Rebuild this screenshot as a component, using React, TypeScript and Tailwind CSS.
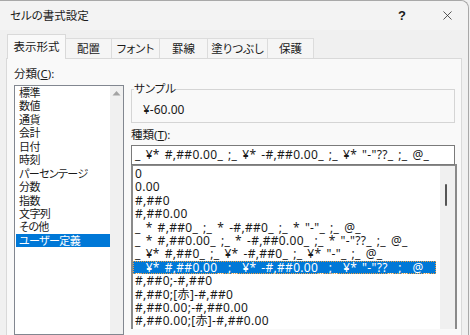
import { X } from 'lucide-react';

const categories = [
  '標準',
  '数値',
  '通貨',
  '会計',
  '日付',
  '時刻',
  'パーセンテージ',
  '分数',
  '指数',
  '文字列',
  'その他',
  'ユーザー定義',
];

const formats = [
  '0',
  '0.00',
  '#,##0',
  '#,##0.00',
  '_ * #,##0_ ;_ * -#,##0_ ;_ * "-"_ ;_ @_',
  '_ * #,##0.00_ ;_ * -#,##0.00_ ;_ * "-"??_ ;_ @_',
  '_ ¥* #,##0_ ;_ ¥* -#,##0_ ;_ ¥* "-"_ ;_ @_',
  '_ ¥* #,##0.00_ ;_ ¥* -#,##0.00_ ;_ ¥* "-"??_ ;_ @_',
  '#,##0;-#,##0',
  '#,##0;[赤]-#,##0',
  '#,##0.00;-#,##0.00',
  '#,##0.00;[赤]-#,##0.00',
];

const tabs = [
  { label: '表示形式', w: 'w-[59px]' },
  { label: '配置', w: 'w-[46px]' },
  { label: 'フォント', w: 'w-[48px]' },
  { label: '罫線', w: 'w-[48px]' },
  { label: '塗りつぶし', w: 'w-[60px]' },
  { label: '保護', w: 'w-[46px]' },
];

export default function App() {
  const selectedCategory = 'ユーザー定義';
  const selectedFormat = formats[7];

  return (
    <div className="w-[470px] h-[335px] overflow-hidden bg-[#f0f0f0] font-['Noto_Sans','Noto_Sans_CJK_JP',sans-serif] text-[12px] text-[#1a1a1a] [font-feature-settings:'palt']">
      <div className="w-[469px] h-[335px] flex flex-col border-r border-t border-[#a8a8a8] rounded-tr-[8px] bg-[#f0f0f0]">
        {/* Title bar */}
        <div className="h-[29px] shrink-0 flex items-center pl-[10px] bg-[#f3f3f3] rounded-tr-[8px]">
          <span className="flex-1 text-[11.5px]">セルの書式設定</span>
          <span className="w-[10px] text-[13px] font-bold mr-[32px] font-['Liberation_Sans',sans-serif]">?</span>
          <X className="w-[15px] h-[15px] mr-[13px] text-[#333]" strokeWidth={1.3} />
        </div>

        {/* Tabs */}
        <div className="h-[28px] shrink-0 flex items-end pl-[7px] text-[11.5px]">
          {tabs.map((t, i) =>
            i === 0 ? (
              <div
                key={t.label}
                className={`${t.w} h-[25px] flex items-center justify-center bg-[#f9f9f9] border border-b-0 border-[#d9d9d9] relative -mb-px z-10 pb-[1px]`}
              >
                {t.label}
              </div>
            ) : (
              <div
                key={t.label}
                className={`${t.w} h-[20px] flex items-center justify-center bg-[#f5f5f5] border border-b-0 border-l-0 border-[#dcdcdc] whitespace-nowrap`}
              >
                {t.label}
              </div>
            )
          )}
        </div>

        {/* Panel */}
        <div className="flex-1 ml-[6px] mr-[6px] border border-b-0 border-[#d9d9d9] bg-[#f9f9f9] flex pl-[7px]">
          {/* Category */}
          <div className="w-[110px] flex flex-col pt-[6px]">
            <div className="h-[18px] leading-[18px] text-[11.5px] mb-[2px]">
              分類(<span className="underline">C</span>):
            </div>
            <div className="flex-1 flex border border-[#828790] bg-white">
              <div className="flex-1 pl-[1px] text-[11px] tracking-[-0.6px]">
                {categories.map((c) => (
                  <div
                    key={c}
                    className={`h-[13.45px] leading-[13.45px] pl-[3px] whitespace-nowrap ${
                      c === selectedCategory ? 'bg-[#0078d7] text-white' : ''
                    }`}
                  >
                    {c}
                  </div>
                ))}
              </div>
              <div className="w-[13px] bg-[#f0f0f0] flex justify-center pt-[4px]">
                <svg width="9" height="6" viewBox="0 0 9 6">
                  <path d="M0.5 5.5 L4.5 1 L8.5 5.5 Z" fill="#a3a3a3" />
                </svg>
              </div>
            </div>
          </div>

          {/* Right side */}
          <div className="ml-[7px] w-[326px] flex flex-col pt-[23px]">
            <fieldset className="h-[41px] border border-[#d5d5d5] px-[10px] mr-[2px]">
              <legend className="px-0 ml-[-8px] leading-[14px] text-[11.5px]">サンプル</legend>
              <div className="leading-[16px] pt-[6px] pl-[1px]">¥-60.00</div>
            </fieldset>
            <div className="h-[22px] leading-[20px] pt-[2px] text-[11.5px]">
              種類(<span className="underline">T</span>):
            </div>
            <div className="h-[20px] border border-[#7a7a7a] bg-white pl-[3px] leading-[18px] whitespace-nowrap mr-[2px] relative z-10 tracking-[0.3px] [word-spacing:1.6px]">
              {selectedFormat}
            </div>
            <div className="flex-1 flex border-2 border-b-0 border-[#8a8a8a] bg-white mb-[6px] -mt-px">
              <div className="flex-1 pt-[1px] tracking-[0.3px] [word-spacing:1.6px]">
                {formats.map((f, i) => (
                  <div
                    key={i}
                    className={`h-[13.4px] leading-[13.4px] pl-[2px] whitespace-nowrap ${
                      i === 7 ? 'bg-[#0078d7] text-white outline outline-dotted outline-[#f0a040] -outline-offset-1' : ''
                    }`}
                  >
                    {f}
                  </div>
                ))}
              </div>
              <div className="w-[15px] bg-[#f0f0f0] relative ml-[4px]">
                <div className="absolute left-[5px] top-[18px] w-[2px] h-[22px] bg-[#555] rounded-full" />
              </div>
            </div>
          </div>
        </div>
      </div>
    </div>
  );
}
